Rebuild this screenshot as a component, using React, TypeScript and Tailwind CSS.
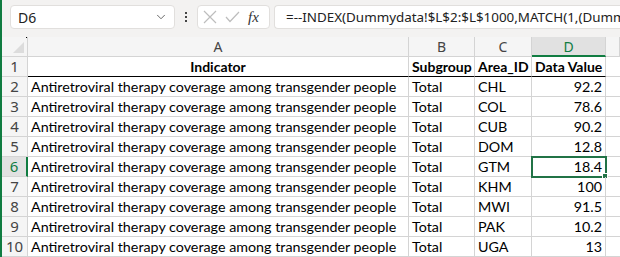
import { ChevronDown } from 'lucide-react'

const ROWS = [
  { area: 'CHL', value: '92.2' },
  { area: 'COL', value: '78.6' },
  { area: 'CUB', value: '90.2' },
  { area: 'DOM', value: '12.8' },
  { area: 'GTM', value: '18.4' },
  { area: 'KHM', value: '100' },
  { area: 'MWI', value: '91.5' },
  { area: 'PAK', value: '10.2' },
  { area: 'UGA', value: '13' },
]

const cellFont = { fontFamily: 'Lato, "Open Sans", sans-serif' }
const uiFont = { fontFamily: '"Noto Sans", "Open Sans", sans-serif' }
const COLS = 'grid-cols-[26px_381px_66px_57px_74px_1fr]'

function ColHead({ label, active }: { label: string; active?: boolean }) {
  return (
    <div
      className={
        'h-[20px] flex items-center justify-center border-r border-b border-[#d4d4d4] text-[14px] ' +
        (active ? 'bg-[#e1e1e1] text-[#107c41] border-b-2 border-b-[#107c41]' : 'bg-[#f5f5f5] text-[#444]')
      }
      style={uiFont}
    >
      {label}
    </div>
  )
}

function RowHead({ n, active }: { n: number; active?: boolean }) {
  return (
    <div
      className={
        'h-[20px] flex items-center justify-center border-b border-[#d4d4d4] text-[15px] ' +
        (active
          ? 'bg-[#e1e1e1] text-[#107c41] border-r-2 border-r-[#107c41]'
          : 'bg-[#f5f5f5] text-[#444] border-r border-r-[#d4d4d4]')
      }
      style={uiFont}
    >
      {n}
    </div>
  )
}

export default function App() {
  return (
    <div className="w-[620px] h-[257px] overflow-hidden bg-white flex">
      <div className="w-[2px] bg-[#107c41] shrink-0" />
      <div className="flex-1 flex flex-col min-w-0">
        {/* formula bar */}
        <div className="h-[37px] bg-[#f3f2f1] flex items-start pt-[5px] pl-[8px] gap-[4px] shrink-0">
          <div
            className="w-[165px] h-[24px] bg-white border border-[#e1dfdd] rounded-[4px] flex items-center justify-between pl-[7px] pr-[6px] text-[14px] text-[#222]"
            style={uiFont}
          >
            D6
            <ChevronDown size={14} strokeWidth={1.5} className="text-[#555]" />
          </div>
          <div className="w-[14px] h-[24px] flex flex-col items-center justify-center gap-[2px]">
            <span className="w-[2px] h-[2px] bg-[#444]" />
            <span className="w-[2px] h-[2px] bg-[#444]" />
            <span className="w-[2px] h-[2px] bg-[#444]" />
          </div>
          <div className="w-[73px] h-[24px] bg-white border border-[#e1dfdd] rounded-[4px] flex items-center pl-[5px] gap-[8px]">
            <svg width="14" height="14" viewBox="0 0 14 14" fill="none" stroke="#bdbdbd" strokeWidth="1.2">
              <path d="M1 1L13 13M13 1L1 13" />
            </svg>
            <svg width="15" height="12" viewBox="0 0 15 12" fill="none" stroke="#bdbdbd" strokeWidth="1.2">
              <path d="M1 6L5 10.5L14 1" />
            </svg>
            <span className="text-[15px] italic text-[#333] leading-none" style={{ fontFamily: '"Liberation Serif", serif' }}>
              fx
            </span>
          </div>
          <div
            className="flex-1 h-[24px] bg-white border border-[#e1dfdd] border-r-0 rounded-l-[4px] flex items-center pl-[11px] text-[13.4px] text-[#222] whitespace-nowrap overflow-hidden"
            style={uiFont}
          >
            =--INDEX(Dummydata!$L$2:$L$1000,MATCH(1,(Dummy
          </div>
        </div>

        {/* sheet */}
        <div className={'grid ' + COLS + ' relative'}>
          <div className="h-[20px] bg-[#f5f5f5] border-r border-b border-[#d4d4d4] relative">
            <span className="absolute left-[24px] top-0 w-[1px] h-[1px] bg-black" />
            <svg className="absolute right-[3px] bottom-[3px]" width="11" height="11" viewBox="0 0 11 11">
              <path d="M11 0L11 11L0 11Z" fill="#dcdcdc" />
            </svg>
          </div>
          <ColHead label="A" />
          <ColHead label="B" />
          <ColHead label="C" />
          <ColHead label="D" active />
          <ColHead label="" />

          <RowHead n={1} />
          <div className="h-[20px] border-r border-[#d4d4d4] border-b border-b-black flex items-center justify-center font-bold text-[14px] text-black" style={cellFont}>
            Indicator
          </div>
          <div className="h-[20px] border-r border-[#d4d4d4] border-b border-b-black flex items-center pl-[3px] font-bold text-[14px] text-black whitespace-nowrap" style={cellFont}>
            Subgroup
          </div>
          <div className="h-[20px] border-r border-[#d4d4d4] border-b border-b-black flex items-center pl-[3px] font-bold text-[14px] text-black whitespace-nowrap" style={cellFont}>
            Area_ID
          </div>
          <div className="h-[20px] border-r border-[#d4d4d4] border-b border-b-black flex items-center pl-[3px] font-bold text-[14px] text-black whitespace-nowrap" style={cellFont}>
            Data Value
          </div>
          <div className="h-[20px] border-b border-[#d4d4d4]" />

          {ROWS.map((r, i) => {
            const n = i + 2
            const sel = n === 6
            return [
              <RowHead key={'h' + n} n={n} active={sel} />,
              <div key={'a' + n} className="h-[20px] border-r border-b border-[#d4d4d4] flex items-center pl-[3px] text-[14.3px] text-black whitespace-nowrap" style={cellFont}>
                Antiretroviral therapy coverage among transgender people
              </div>,
              <div key={'b' + n} className="h-[20px] border-r border-b border-[#d4d4d4] flex items-center pl-[3px] text-[14.3px] text-black" style={cellFont}>
                Total
              </div>,
              <div key={'c' + n} className="h-[20px] border-r border-b border-[#d4d4d4] flex items-center pl-[3px] text-[14.3px] text-black" style={cellFont}>
                {r.area}
              </div>,
              <div
                key={'d' + n}
                className={
                  'h-[20px] border-r border-b border-[#d4d4d4] flex items-center justify-end pr-[3px] text-[14.3px] text-black relative ' +
                  (sel ? 'outline-2 outline-[#217346] -outline-offset-1' : '')
                }
                style={cellFont}
              >
                {r.value}
                {sel && <span className="absolute -right-[3px] -bottom-[3px] w-[6px] h-[6px] bg-[#217346] border border-white" />}
              </div>,
              <div key={'e' + n} className="h-[20px] border-b border-[#d4d4d4]" />,
            ]
          })}
        </div>
      </div>
    </div>
  )
}
